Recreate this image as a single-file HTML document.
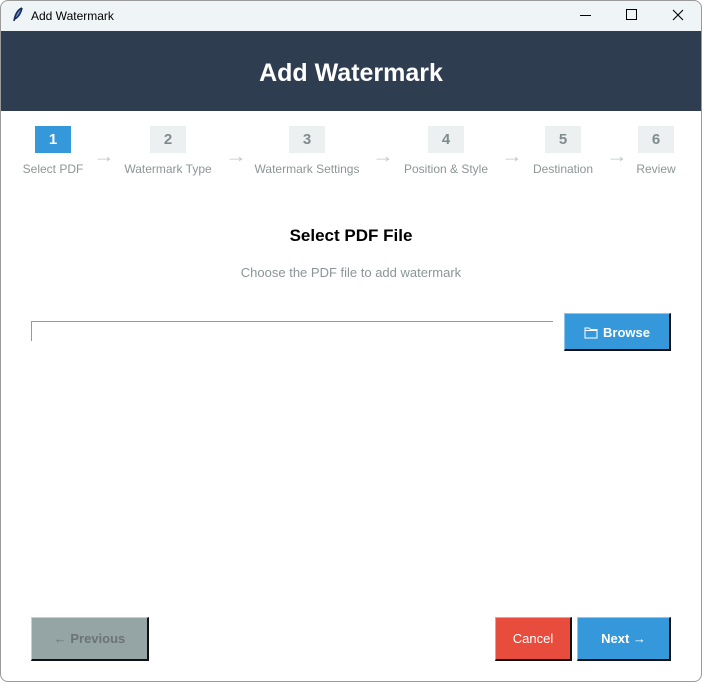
<!DOCTYPE html>
<html><head><style>
*{margin:0;padding:0;box-sizing:border-box}
body{width:702px;height:682px;overflow:hidden;background:#fff;font-family:"Liberation Sans","DejaVu Sans",sans-serif;position:relative}
.win{position:absolute;left:0;top:0;width:702px;height:682px;overflow:hidden;background:#fff;border-radius:8px}
.frame{position:absolute;left:0;top:0;width:702px;height:682px;border:1px solid #9a9a9a;border-radius:8px;pointer-events:none}
.tb{position:absolute;left:0;top:0;width:702px;height:31px;background:#eff4f7}
.tb .t{position:absolute;left:31px;top:9px;font-size:12px;color:#000}
.hd{position:absolute;left:0;top:31px;width:702px;height:80px;background:#2e3d50;color:#fff;font-weight:bold;font-size:25px;text-align:center;line-height:84px}
.box{position:absolute;top:126px;width:36px;height:27px;background:#ecf0f1;color:#7f8c8d;font-weight:bold;font-size:15px;text-align:center;line-height:28px}
.box.a{background:#3498db;color:#fff}
.lb{position:absolute;top:162px;font-size:12px;color:#8c9596;white-space:nowrap;transform:translateX(-50%)}
.ar{position:absolute;top:146px;font-size:18px;color:#c0c5c6;transform:scaleX(1.2)}
.btn{position:absolute;font-size:13px;font-weight:bold;text-align:center;color:#fff;border-right:2px solid #111;border-bottom:2px solid #111}
</style></head><body><div class="win">
<div class="tb">
<svg style="position:absolute;left:12px;top:7px" width="12" height="16" viewBox="0 0 12 16"><path d="M10 1 C5 3 3 8 2 14 M10 1 C9 6 6 10 3 12" stroke="#1a2a5a" stroke-width="1.6" fill="#5a8ad0"/></svg>
<span class="t">Add Watermark</span>
<div style="position:absolute;left:580px;top:15px;width:11px;height:1px;background:#000"></div>
<div style="position:absolute;left:626px;top:9px;width:11px;height:11px;border:1px solid #000"></div>
<svg style="position:absolute;left:672px;top:9px" width="12" height="12" viewBox="0 0 12 12"><path d="M1 1L11 11M11 1L1 11" stroke="#000" stroke-width="1.1"/></svg>
</div>
<div class="hd">Add Watermark</div>
<div class="box a" style="left:35px">1</div>
<div class="box" style="left:150px">2</div>
<div class="box" style="left:289px">3</div>
<div class="box" style="left:428px">4</div>
<div class="box" style="left:545px">5</div>
<div class="box" style="left:638px">6</div>
<div class="lb" style="left:53px">Select PDF</div>
<div class="lb" style="left:168px">Watermark Type</div>
<div class="lb" style="left:307px">Watermark Settings</div>
<div class="lb" style="left:446px">Position &amp; Style</div>
<div class="lb" style="left:563px">Destination</div>
<div class="lb" style="left:656px">Review</div>
<div class="ar" style="left:95px">→</div>
<div class="ar" style="left:227px">→</div>
<div class="ar" style="left:374px">→</div>
<div class="ar" style="left:503px">→</div>
<div class="ar" style="left:608px">→</div>
<div style="position:absolute;top:226px;left:0;width:702px;text-align:center;font-weight:bold;font-size:17px;color:#000">Select PDF File</div>
<div style="position:absolute;top:265px;left:0;width:702px;text-align:center;font-size:13px;color:#8c9596">Choose the PDF file to add watermark</div>
<div style="position:absolute;left:31px;top:321px;width:522px;height:20px;border-left:1px solid #999;border-top:1px solid #999"></div>
<div class="btn" style="left:564px;top:313px;width:107px;height:38px;background:#3498db;line-height:37px;border-top:1px solid #8ec5ee;border-left:1px solid #8ec5ee">
<svg width="14" height="13" viewBox="0 0 14 13" style="vertical-align:-2px;margin-right:5px"><path d="M1 2h4l1.5 1.5H13V12H1z M1 4.5h12" fill="none" stroke="#fff" stroke-width="1"/></svg>Browse</div>
<div class="btn" style="left:31px;top:617px;width:118px;height:44px;background:#95a5a6;color:#6b7374;line-height:42px;border-top:1px solid #c8d0d0;border-left:1px solid #c8d0d0">← Previous</div>
<div class="btn" style="left:495px;top:617px;width:77px;height:44px;background:#e74c3c;font-weight:normal;line-height:42px;border-top:1px solid #f09a90;border-left:1px solid #f09a90">Cancel</div>
<div class="btn" style="left:577px;top:617px;width:94px;height:44px;background:#3498db;line-height:42px;border-top:1px solid #8ec5ee;border-left:1px solid #8ec5ee">Next →</div>
</div><div class="frame"></div></body></html>
